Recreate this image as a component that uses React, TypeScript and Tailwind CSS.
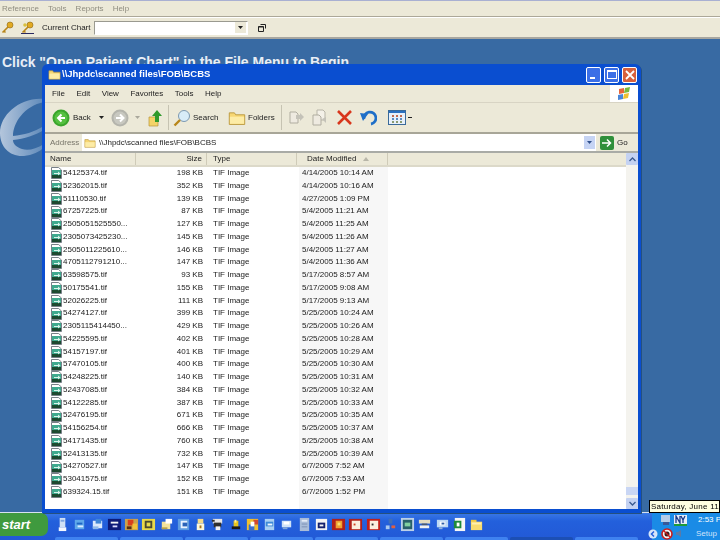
const files: [string, string, string][] = [
  ["54125374.tif", "198 KB", "4/14/2005 10:14 AM"],
  ["52362015.tif", "352 KB", "4/14/2005 10:16 AM"],
  ["51110530.tif", "139 KB", "4/27/2005 1:09 PM"],
  ["67257225.tif", "87 KB", "5/4/2005 11:21 AM"],
  ["2505051525550...", "127 KB", "5/4/2005 11:25 AM"],
  ["2305073425230...", "145 KB", "5/4/2005 11:26 AM"],
  ["2505011225610...", "146 KB", "5/4/2005 11:27 AM"],
  ["4705112791210...", "147 KB", "5/4/2005 11:36 AM"],
  ["63598575.tif", "93 KB", "5/17/2005 8:57 AM"],
  ["50175541.tif", "155 KB", "5/17/2005 9:08 AM"],
  ["52026225.tif", "111 KB", "5/17/2005 9:13 AM"],
  ["54274127.tif", "399 KB", "5/25/2005 10:24 AM"],
  ["2305115414450...", "429 KB", "5/25/2005 10:26 AM"],
  ["54225595.tif", "402 KB", "5/25/2005 10:28 AM"],
  ["54157197.tif", "401 KB", "5/25/2005 10:29 AM"],
  ["57470105.tif", "400 KB", "5/25/2005 10:30 AM"],
  ["54248225.tif", "140 KB", "5/25/2005 10:31 AM"],
  ["52437085.tif", "384 KB", "5/25/2005 10:32 AM"],
  ["54122285.tif", "387 KB", "5/25/2005 10:33 AM"],
  ["52476195.tif", "671 KB", "5/25/2005 10:35 AM"],
  ["54156254.tif", "666 KB", "5/25/2005 10:37 AM"],
  ["54171435.tif", "760 KB", "5/25/2005 10:38 AM"],
  ["52413135.tif", "732 KB", "5/25/2005 10:39 AM"],
  ["54270527.tif", "147 KB", "6/7/2005 7:52 AM"],
  ["53041575.tif", "152 KB", "6/7/2005 7:53 AM"],
  ["639324.15.tif", "151 KB", "6/7/2005 1:52 PM"],
];

// quick launch tiles: list of [fill, x, y, w, h] on a 16 grid
type Bit = [string, number, number, number, number];
const tiles: Bit[][] = [
  [["#cfe0f5", 5, 1, 6, 10], ["#7fa6e0", 6, 3, 4, 2], ["#f4f8ff", 4, 11, 8, 4]],
  [["#5fa8ea", 3, 3, 10, 10], ["#1f66c4", 5, 6, 6, 2], ["#d9ecff", 6, 9, 6, 2]],
  [["#dbe9fb", 3, 4, 10, 8], ["#3f86d6", 6, 2, 6, 5], ["#8fb9ea", 3, 10, 6, 3]],
  [["#0d1a78", 1, 2, 14, 12], ["#f3f3f3", 4, 5, 8, 2], ["#d8d8ff", 6, 9, 5, 2]],
  [["#c9a24c", 1, 2, 14, 12], ["#d9401a", 4, 3, 6, 6], ["#f0c23a", 9, 7, 5, 6], ["#5a2d10", 3, 10, 5, 3]],
  [["#e8d94a", 1, 2, 14, 12], ["#4a4a30", 4, 4, 8, 8], ["#e8d94a", 6, 6, 4, 4]],
  [["#f2e29a", 3, 5, 9, 8], ["#ffffff", 7, 2, 7, 5], ["#b8a24a", 3, 11, 6, 2]],
  [["#5c9be0", 2, 2, 12, 12], ["#e8f2ff", 5, 4, 7, 8], ["#2a62b8", 7, 6, 5, 4]],
  [["#f3d98a", 5, 2, 6, 5], ["#fff7d8", 4, 7, 8, 7], ["#a8761c", 7, 9, 2, 3]],
  [["#e6e6e6", 3, 2, 10, 5], ["#2e2e2e", 4, 6, 8, 5], ["#f2f2f2", 6, 10, 5, 4], ["#2e2e2e", 2, 3, 3, 2]],
  [["#e8c51e", 6, 4, 5, 7], ["#1a1a1a", 4, 10, 9, 3], ["#fff09a", 7, 3, 2, 3]],
  [["#f0c030", 2, 2, 12, 12], ["#3a6fd0", 4, 8, 6, 6], ["#d04a30", 9, 3, 5, 5], ["#ffffff", 6, 5, 4, 5]],
  [["#a9d0f2", 3, 2, 10, 12], ["#3e8bd8", 4, 5, 8, 5], ["#eef6ff", 6, 7, 5, 2]],
  [["#cfe2f7", 3, 4, 10, 7], ["#ffffff", 5, 5, 6, 3], ["#7fa6da", 4, 11, 5, 2]],
  [["#a9bcd8", 3, 1, 10, 14], ["#e3eaf5", 5, 3, 6, 2], ["#7c90b4", 5, 7, 6, 1], ["#7c90b4", 5, 10, 6, 1]],
  [["#f4f4f4", 2, 2, 12, 12], ["#14206e", 4, 6, 8, 6], ["#f4f4f4", 6, 8, 4, 2]],
  [["#b0201a", 1, 2, 14, 12], ["#f0a030", 5, 4, 7, 8], ["#f8e070", 7, 6, 3, 3]],
  [["#b0201a", 1, 2, 14, 12], ["#fbeede", 4, 4, 9, 9], ["#d04020", 6, 7, 2, 2]],
  [["#c0201a", 1, 2, 14, 12], ["#fbeede", 4, 4, 9, 9], ["#303030", 6, 7, 2, 2]],
  [["#3f6fb8", 6, 2, 4, 5], ["#a8c8f0", 3, 9, 4, 4], ["#e06040", 9, 9, 4, 3]],
  [["#bcd0e8", 1, 1, 14, 14], ["#28606a", 3, 3, 10, 10], ["#80d0a0", 5, 6, 6, 4]],
  [["#e4dcc0", 2, 3, 12, 4], ["#4a5a70", 5, 7, 6, 2], ["#f0f0f0", 3, 9, 10, 3]],
  [["#bcd8f4", 2, 3, 12, 8], ["#ffffff", 5, 5, 6, 4], ["#3060a8", 7, 6, 3, 2], ["#8cb0dc", 4, 11, 4, 2]],
  [["#f6f6f6", 3, 1, 11, 14], ["#1f8a3a", 2, 4, 8, 8], ["#ffffff", 5, 6, 3, 4]],
  [["#f0c840", 2, 3, 6, 3], ["#f8dc70", 2, 5, 12, 9], ["#fff0b0", 3, 6, 10, 2]],
];

function Tile({ bits }: { bits: Bit[] }) {
  return (
    <svg width="15" height="15" viewBox="0 0 16 16" className="shrink-0">
      {bits.map((b, i) => (
        <rect key={i} fill={b[0]} x={b[1]} y={b[2]} width={b[3]} height={b[4]} />
      ))}
    </svg>
  );
}

function TifIcon() {
  return (
    <svg width="11" height="12" viewBox="0 0 11 12" className="shrink-0">
      <path d="M.5.5h7L10.500 3v8.500H.5z" fill="#fff" stroke="#56606a" strokeWidth=".8" />
      <rect x="1" y="3" width="9" height="8" fill="#3fa98e" />
      <rect x="1" y="8" width="9" height="3" fill="#1c4a30" />
      <path d="M3 6h4V4.500L9.500 6.500 7 8.500V7H3z" fill="#d8f4ea" />
    </svg>
  );
}

function Folder({ size = 14 }: { size?: number }) {
  return (
    <svg width={size} height={size} viewBox="0 0 14 14" className="shrink-0">
      <path d="M1 3h4l1 1.500h7V12H1z" fill="#f7d774" stroke="#b8963c" strokeWidth=".7" />
      <path d="M1.500 6h11v5.500h-11z" fill="#fdeca6" />
    </svg>
  );
}

function NavCircle({ grey }: { grey?: boolean }) {
  return (
    <svg width="18" height="18" viewBox="0 0 18 18" className="shrink-0">
      <circle cx="9" cy="9" r="8.500" fill={grey ? "#b4b4ac" : "#3aa52c"} />
      <circle cx="9" cy="9" r="6.500" fill={grey ? "#c8c8c0" : "#55c040"} />
      {grey ? (
        <path d="M5 9h7M9 5.500L12.500 9 9 12.500" fill="none" stroke="#fff" strokeWidth="2" />
      ) : (
        <path d="M13 9H6M9.500 5.500L6 9l3.500 3.500" fill="none" stroke="#fff" strokeWidth="2" />
      )}
    </svg>
  );
}

function Caret({ color = "#222" }: { color?: string }) {
  return (
    <svg width="5" height="3" viewBox="0 0 5 3" className="shrink-0">
      <path d="M0 0h5L2.500 3z" fill={color} />
    </svg>
  );
}

function KeyIcon({ box }: { box?: boolean }) {
  return (
    <svg width="13" height="13" viewBox="0 0 13 13" className="shrink-0">
      <circle cx="9" cy="4" r="3" fill="#e2aa22" stroke="#8a6412" strokeWidth=".6" />
      <path d="M7 6L1.500 11.500M3 10l1.500 1.500" stroke="#b8861a" strokeWidth="1.600" fill="none" />
      {box && <path d="M0 12.500h13" stroke="#2a2a60" strokeWidth="1" />}
      {box && <circle cx="4" cy="4" r="1.800" fill="#d8c040" />}
    </svg>
  );
}

function CopyIcon() {
  return (
    <svg width="17" height="17" viewBox="0 0 17 17" className="shrink-0">
      <path d="M2 3h6l2 2v9H2z" fill="#eeeae0" stroke="#b0ada0" />
      <path d="M8 6h4V4l4 4-4 4v-2H8z" fill="#c4c2b8" />
    </svg>
  );
}

function MoveIcon() {
  return (
    <svg width="17" height="17" viewBox="0 0 17 17" className="shrink-0">
      <path d="M6 1h6l2 2v8H6z" fill="#f4f1e8" stroke="#b8b5a8" />
      <path d="M2 6h6l2 2v8H2z" fill="#eeeae0" stroke="#b0ada0" />
      <path d="M11 10l4-2v6z" fill="#c4c2b8" />
    </svg>
  );
}

function WinButton({ children, red }: { children: React.ReactNode; red?: boolean }) {
  return (
    <div
      className={
        red
          ? "flex h-[16px] w-[15px] items-center justify-center rounded-[2px] border border-white bg-[#d8603c]"
          : "flex h-[16px] w-[15px] items-center justify-center rounded-[2px] border border-white bg-[#3b6fe6]"
      }
    >
      {children}
    </div>
  );
}

function HeaderCell({ className, children }: { className: string; children?: React.ReactNode }) {
  return <div className={`flex h-full items-center border-r border-[#cfcbb8] ${className}`}>{children}</div>;
}

export default function App() {
  return (
    <div className="relative flex h-[540px] w-[720px] flex-col overflow-hidden bg-[#386aa3] font-['Liberation_Sans',Arial,sans-serif]">
      {/* App menu */}
      <div className="flex h-[17px] shrink-0 items-center gap-[9px] border-t border-t-[#a9b0d2] border-b border-b-[#aca899] bg-[#ece9d8] pl-[2px] text-[8px] text-[#8f8d80] blur-[0.3px]">
        <span>Reference</span>
        <span>Tools</span>
        <span>Reports</span>
        <span>Help</span>
      </div>
      {/* App toolbar */}
      <div className="flex h-[22px] shrink-0 items-center border-t border-t-white border-b-2 border-b-[#a7a6a0] bg-[#ece9d8] pl-[1px]">
        <div className="flex items-center gap-[7px]">
          <KeyIcon />
          <KeyIcon box />
        </div>
        <span className="ml-[8px] text-[8px] text-[#222] blur-[0.3px]">Current Chart</span>
        <div className="ml-[4px] flex h-[14px] w-[154px] items-center justify-end border border-[#9a9a90] border-r-white border-b-white bg-white pr-[1px]">
          <div className="flex h-[11px] w-[11px] items-center justify-center bg-[#ece9d8]">
            <Caret />
          </div>
        </div>
        <svg width="8" height="8" viewBox="0 0 8 8" className="ml-[10px] shrink-0">
          <path d="M2.500.5h5v4M.5 2.500h5v5h-5z" fill="none" stroke="#222" />
          <path d="M.5 3h5" stroke="#222" />
        </svg>
      </div>

      {/* Desktop */}
      <div className="relative min-h-0 flex-1">
        <p className="pl-[2px] pt-[15px] text-[14px] font-bold leading-[16px] whitespace-nowrap text-[#e8eef6]">
          Click "Open Patient Chart" in the File Menu to Begin
        </p>
        <svg width="44" height="62" viewBox="0 0 44 62" className="absolute top-[58px] left-0">
          <defs>
            <linearGradient id="eFill" x1="0" x2="1" y1="0" y2="0">
              <stop offset="0" stopColor="#b4c6dc" />
              <stop offset="1" stopColor="#5f8aba" />
            </linearGradient>
          </defs>
          <path
            d="M44 2C20 0 0 18 0 36c0 14 10 24 24 23 8-1 16-4 20-9v-3c-8 5-16 7-22 5-6-2-9-5-9-9 11-1 23-5 31-10v-4c-10 6-20 9-31 10C13 26 24 9 44 5z"
            fill="url(#eFill)"
          />
        </svg>

        {/* Explorer window */}
        <div className="absolute top-[25px] left-[42px] flex h-[449px] w-[599px] flex-col rounded-t-[6px] bg-[#0a4ed0] px-[3px] pb-[4px] shadow-[1px_1px_0_#24507f]">
          <div className="flex h-[21px] shrink-0 items-center pr-[1px] pl-[3px]">
            <Folder size={13} />
            <span className="ml-px text-[9.500px] font-bold whitespace-nowrap text-white blur-[0.3px]">
              {"\\\\Jhpdc\\scanned files\\FOB\\BCBS"}
            </span>
            <div className="ml-auto flex gap-[3px]">
              <WinButton>
                <div className="mt-[7px] mr-[3px] h-[2px] w-[5px] bg-white" />
              </WinButton>
              <WinButton>
                <div className="h-[9px] w-[10px] border border-t-2 border-white" />
              </WinButton>
              <WinButton red>
                <svg width="10" height="10" viewBox="0 0 10 10">
                  <path d="M1 1l8 8M9 1l-8 8" stroke="#fff" strokeWidth="1.800" />
                </svg>
              </WinButton>
            </div>
          </div>

          {/* Menu */}
          <div className="flex h-[18px] shrink-0 items-center border-b border-b-[#d8d4c4] bg-[#ece9d8] pl-[7px] text-[8px] text-[#222]">
            <div className="flex gap-[11.500px] blur-[0.3px]">
              <span>File</span>
              <span>Edit</span>
              <span>View</span>
              <span>Favorites</span>
              <span>Tools</span>
              <span>Help</span>
            </div>
            <div className="ml-auto flex h-full w-[28px] items-center justify-center bg-white">
              <svg width="15" height="14" viewBox="0 0 15 14">
                <path d="M2 2l5-1v5l-5 1z" fill="#e8663a" />
                <path d="M8 1l5-1-1 5-5 1z" fill="#7ab83a" />
                <path d="M1 8l5-1v5l-5 1z" fill="#4a86d8" />
                <path d="M7 7l5-1-1 5-5 1z" fill="#f0c030" />
              </svg>
            </div>
          </div>

          {/* Buttons */}
          <div className="flex h-[31px] shrink-0 items-center border-b-2 border-b-[#a8a698] bg-[#ece9d8] pl-[7px] text-[8px] text-[#222]">
            <NavCircle />
            <span className="ml-[3px] w-[20px] blur-[0.3px]">Back</span>
            <div className="ml-[6px]">
              <Caret />
            </div>
            <div className="ml-[7px]">
              <NavCircle grey />
            </div>
            <div className="ml-[6px]">
              <Caret color="#aaa89c" />
            </div>
            <svg width="16" height="18" viewBox="0 0 16 18" className="ml-[8px] shrink-0">
              <path d="M1 8h9v9H1z" fill="#f4d468" stroke="#b8963c" strokeWidth=".7" />
              <path d="M9 1l5 6h-3v6H7V7H4z" fill="#2f9a2c" />
            </svg>
            <div className="ml-[4px] h-[25px] w-px bg-[#c6c3b2]" />
            <svg width="18" height="18" viewBox="0 0 18 18" className="ml-[4px] shrink-0">
              <circle cx="11" cy="7" r="5.500" fill="#d8ecf8" stroke="#7c98b0" />
              <path d="M7 11l-5.500 5.500" stroke="#b8861a" strokeWidth="2.400" />
            </svg>
            <span className="ml-[2px] w-[27px] blur-[0.3px]">Search</span>
            <div className="ml-[8px]">
              <Folder size={18} />
            </div>
            <span className="ml-[2px] w-[30px] blur-[0.3px]">Folders</span>
            <div className="ml-[3px] h-[25px] w-px bg-[#c6c3b2]" />
            <div className="ml-[6px]">
              <CopyIcon />
            </div>
            <div className="ml-[6px]">
              <MoveIcon />
            </div>
            <svg width="17" height="17" viewBox="0 0 17 17" className="ml-[8px] shrink-0">
              <path d="M2 2l13 13M15 2L2 15" stroke="#d8361c" strokeWidth="2.600" />
            </svg>
            <svg width="17" height="16" viewBox="0 0 17 16" className="ml-[7px] shrink-0">
              <path d="M4 9a6 6 0 1 1 7 5" fill="none" stroke="#1f6fc8" strokeWidth="2.800" />
              <path d="M0 3l8 1-5 7z" fill="#1f6fc8" />
            </svg>
            <svg width="18" height="15" viewBox="0 0 18 15" className="ml-[11px] shrink-0">
              <rect x=".5" y=".5" width="17" height="14" fill="#e8f0fa" stroke="#3a6a9a" />
              <rect x="1" y="1" width="16" height="2" fill="#2a70c0" />
              <path d="M4 5h2v2H4zM8 5h2v2H8zM12 5h2v2h-2z" fill="#c06a50" />
              <path d="M4 8h2v2H4zM8 8h2v2H8zM12 8h2v2h-2z" fill="#5a8ac0" />
              <path d="M4 11h2v2H4zM8 11h2v2H8zM12 11h2v2h-2z" fill="#8a9a70" />
            </svg>
            <div className="ml-[2px] h-px w-[4px] bg-[#222]" />
          </div>

          {/* Address */}
          <div className="flex h-[17px] shrink-0 items-center bg-[#ece9d8] text-[8px]">
            <span className="ml-[5px] w-[32px] text-[#77756a] blur-[0.3px]">Address</span>
            <div className="flex h-full w-[514px] items-center bg-white pr-[1px] pl-[2px]">
              <Folder size={12} />
              <span className="ml-[3px] text-[#222] blur-[0.3px]">{"\\\\Jhpdc\\scanned files\\FOB\\BCBS"}</span>
              <div className="ml-auto flex h-[13px] w-[11px] items-center justify-center bg-[#c6d4f4]">
                <Caret color="#30508c" />
              </div>
            </div>
            <div className="ml-[4px] flex h-[14px] w-[14px] items-center justify-center rounded-[2px] bg-[#2f8f3a]">
              <svg width="10" height="10" viewBox="0 0 10 10">
                <path d="M0 5h8M5 1.500L8.500 5 5 8.500" fill="none" stroke="#fff" strokeWidth="1.500" />
              </svg>
            </div>
            <span className="ml-[3px] text-[#222] blur-[0.3px]">Go</span>
          </div>

          {/* List + scrollbar */}
          <div className="flex min-h-0 flex-1 border-t-2 border-t-[#a9aba6] bg-white">
            <div className="flex min-w-0 flex-1 flex-col">
              <div className="flex h-[14px] shrink-0 items-center border-b-2 border-b-[#dcd9c9] bg-[#ece9d8] text-[8px] text-[#222]">
                <HeaderCell className="w-[91px] pl-[5px]">
                  <span className="blur-[0.3px]">Name</span>
                </HeaderCell>
                <HeaderCell className="w-[71px] justify-end pr-[4px]">
                  <span className="blur-[0.3px]">Size</span>
                </HeaderCell>
                <HeaderCell className="w-[90px] pl-[6px]">
                  <span className="blur-[0.3px]">Type</span>
                </HeaderCell>
                <HeaderCell className="w-[91px] pl-[10px]">
                  <span className="blur-[0.3px]">Date Modified</span>
                  <svg width="6" height="4" viewBox="0 0 6 4" className="ml-[7px]">
                    <path d="M0 4h6L3 0z" fill="#b8b6a8" />
                  </svg>
                </HeaderCell>
              </div>
              <div className="shrink-0 text-[8px] leading-[12.750px] text-[#1a1a1a]">
                {files.map((f) => (
                  <div key={f[0] + f[2]} className="flex h-[12.750px] items-center whitespace-nowrap">
                    <div className="flex w-[91px] items-center pl-[6px]">
                      <TifIcon />
                      <span className="ml-[1px] blur-[0.3px]">{f[0]}</span>
                    </div>
                    <span className="w-[70px] pr-[3px] text-right blur-[0.3px]">{f[1]}</span>
                    <span className="w-[93px] pl-[7px] blur-[0.3px]">TIF Image</span>
                    <span className="flex h-full w-[89px] items-center bg-[#f7f7f7] pl-[3px]">
                      <span className="blur-[0.3px]">{f[2]}</span>
                    </span>
                  </div>
                ))}
              </div>
              <div className="ml-[254px] w-[89px] flex-1 bg-[#f7f7f7]" />
            </div>
            {/* Scrollbar */}
            <div className="flex w-[12px] shrink-0 flex-col bg-[#f4f3ee]">
              <div className="flex h-[12px] items-center justify-center rounded-[1px] bg-[#c4d2f2]">
                <svg width="7" height="5" viewBox="0 0 7 5">
                  <path d="M.5 4L3.500 1l3 3" fill="none" stroke="#3a5a90" strokeWidth="1.300" />
                </svg>
              </div>
              <div className="mt-auto h-[8px] bg-[#c9d6f4]" />
              <div className="mt-[3px] flex h-[11px] items-center justify-center rounded-[1px] bg-[#c4d2f2]">
                <svg width="7" height="5" viewBox="0 0 7 5">
                  <path d="M.5 1l3 3 3-3" fill="none" stroke="#3a5a90" strokeWidth="1.300" />
                </svg>
              </div>
            </div>
          </div>
        </div>

        {/* Date tooltip */}
        <div className="absolute right-0 bottom-[-1px] flex h-[13px] w-[71px] items-center overflow-hidden border border-black bg-[#ffffe1] pl-[1px] text-[8px] tracking-[0.25px] whitespace-nowrap text-black">
          <span className="blur-[0.2px]">Saturday, June 11</span>
        </div>
      </div>

      {/* Taskbar */}
      <div className="flex h-[28px] shrink-0 border-t border-t-[#d7e2f0] bg-linear-to-b from-[#3a78e6] via-[#2360dc] via-30% to-[#2259d6]">
        <div className="flex min-w-0 flex-1 flex-col">
          <div className="flex h-[23px] items-center">
            <div className="flex h-[23px] w-[48px] items-center rounded-r-[7px] bg-[#3f9a3e] pl-[2px] text-[13px] font-bold italic text-white">
              start
            </div>
            <div className="ml-[7px] flex items-center gap-[2.250px]">
              {tiles.map((t, i) => (
                <Tile key={i} bits={t} />
              ))}
            </div>
          </div>
          <div className="flex h-[4px] gap-[2px] pt-[1px] pl-[55px]">
            {[0, 1, 2, 3, 4, 5, 6, 7, 8].map((i) => (
              <div
                key={i}
                className={i === 7 ? "h-full w-[63px] rounded-t-[2px] bg-[#1c4fb4]" : "h-full w-[63px] rounded-t-[2px] bg-[#3f82f0]"}
              />
            ))}
          </div>
        </div>
        {/* Tray */}
        <div className="flex w-[68px] shrink-0 flex-col overflow-visible bg-[#1a8be6] pl-[5px] text-[8px] text-white">
          <div className="flex h-[15px] items-center">
            <svg width="12" height="12" viewBox="0 0 12 12" className="ml-[3px] shrink-0">
              <rect x="1" y="1" width="9" height="7" fill="#b4cce8" />
              <rect x="3" y="8" width="6" height="3" fill="#39589a" />
            </svg>
            <svg width="13" height="11" viewBox="0 0 13 11" className="ml-[2px] shrink-0">
              <rect width="13" height="9" fill="#e4ecf8" />
              <path d="M2 8V1l4 7V1M7 1l2 4 2-4M9 5v3" fill="none" stroke="#1a3a8c" strokeWidth="1.300" />
              <rect y="9" width="13" height="2" fill="#1f9a3a" />
            </svg>
            <span className="ml-[11px] whitespace-nowrap">2:53 PM</span>
          </div>
          <div className="flex h-[13px] items-center">
            <svg width="10" height="10" viewBox="0 0 10 10" className="-ml-[9px] shrink-0">
              <circle cx="5" cy="5" r="4.500" fill="#d6e6fa" />
              <path d="M6 2.500L3.500 5 6 7.500" fill="none" stroke="#2360dc" strokeWidth="1.500" />
            </svg>
            <svg width="12" height="12" viewBox="0 0 12 12" className="ml-[3px] shrink-0">
              <circle cx="6" cy="6" r="5" fill="#f4f4f4" stroke="#c81e1e" strokeWidth="1.600" />
              <circle cx="6" cy="6" r="2.500" fill="#3a1a1a" />
              <path d="M2.500 2.500l7 7" stroke="#c81e1e" strokeWidth="1.400" />
            </svg>
            <svg width="9" height="9" viewBox="0 0 9 9" className="ml-[2px] shrink-0">
              <path d="M1 3h2l3-2v7L3 6H1z" fill="#5a7aa8" />
            </svg>
            <span className="ml-[12px] whitespace-nowrap text-[#cfe2fa]">Setup</span>
          </div>
        </div>
      </div>
    </div>
  );
}
